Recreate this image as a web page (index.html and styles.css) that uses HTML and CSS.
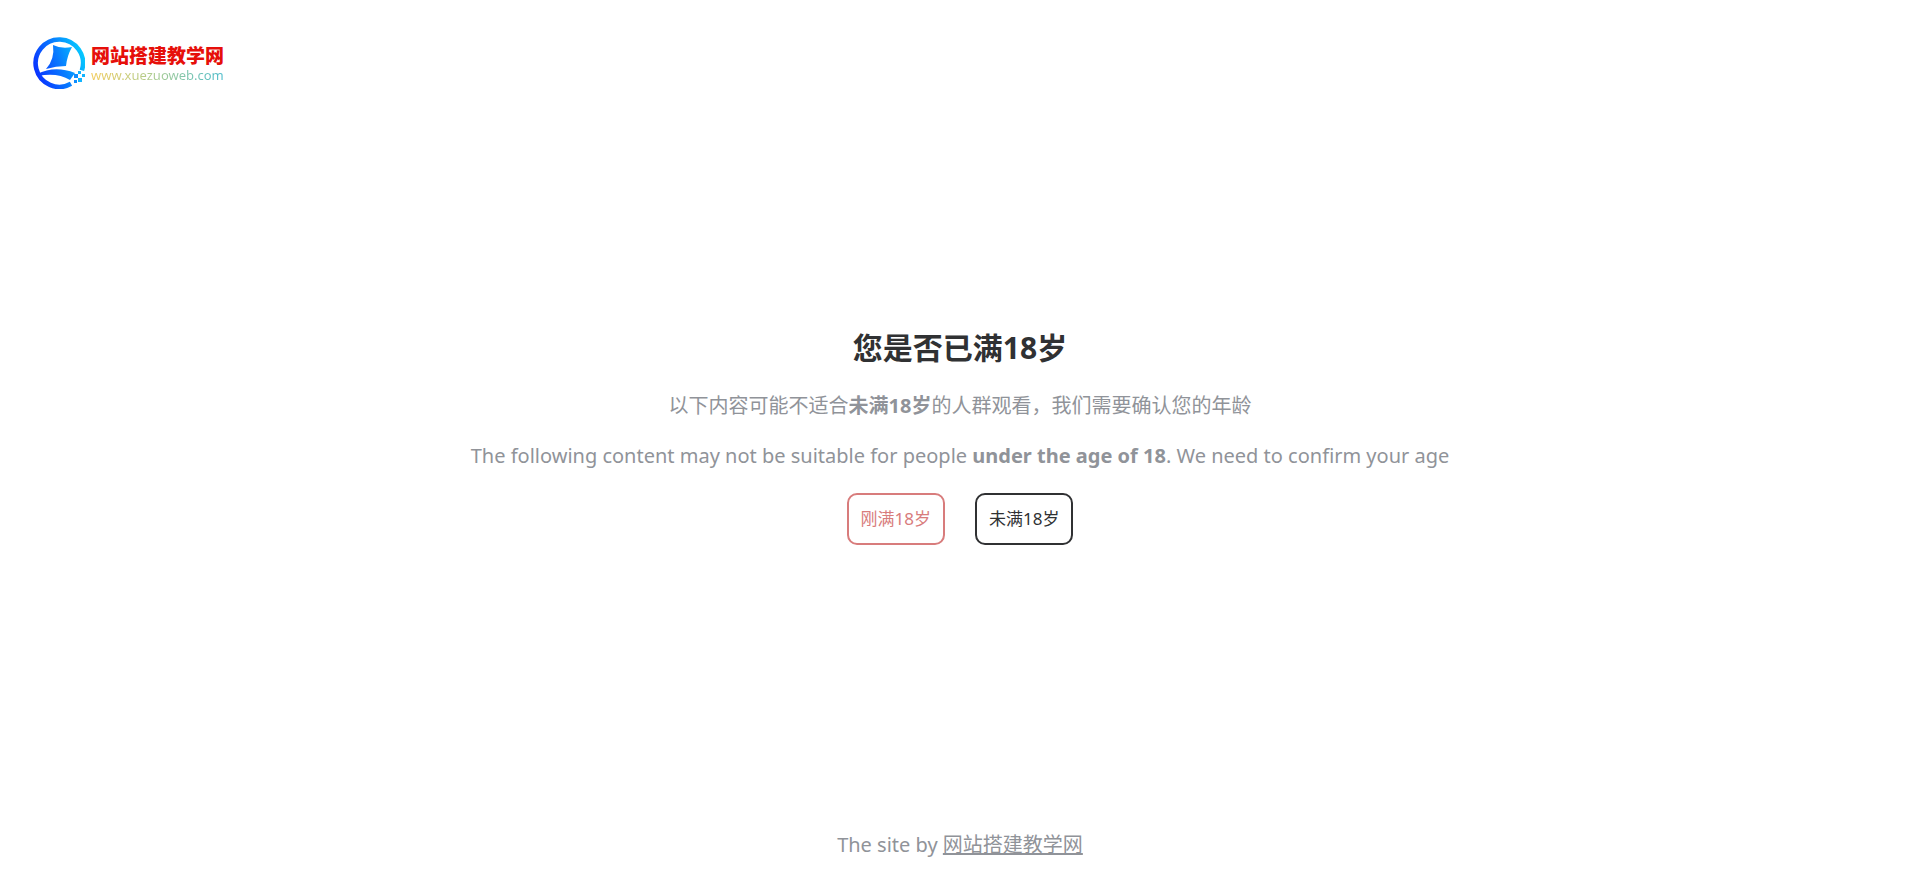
FILE: index.html
```
<!DOCTYPE html>
<html lang="zh-CN">
<head>
  <meta charset="UTF-8">
  <meta name="viewport" content="width=device-width, initial-scale=1.0">
  <title>您是否已满18岁</title>
  <link rel="stylesheet" href="styles.css">
</head>
<body>
  <header class="header">
    <a href="#" class="logo">
      <svg class="logo-icon" viewBox="0 0 52 52" aria-hidden="true">
        <defs>
          <linearGradient id="blue" gradientUnits="userSpaceOnUse" x1="0" y1="36" x2="52" y2="16">
            <stop offset="0" stop-color="#0a2cff"/>
            <stop offset="0.5" stop-color="#0878ff"/>
            <stop offset="1" stop-color="#05ceff"/>
          </linearGradient>
        </defs>
        <path fill="none" stroke="url(#blue)" stroke-width="4.6" d="M48.9 33.4A23.7 23.7 0 1 0 38 46.8"/>
        <path fill="url(#blue)" d="M20 8Q28 12 39 10Q34 19 33 29Q23 29 13 32Q22 22 20 8Z"/>
        <path fill="url(#blue)" d="M4 37Q22 28 42 36L37 43Q24 35 5 39Z"/>
        <path fill="#0d8dff" d="M41 37h4v4h-4z M41 43h3v3h-3z"/>
        <path fill="#12b4ff" d="M45 34h3v3h-3z M45 41h4v4h-4z M49 37h3v3h-3z"/>
      </svg>
      <span class="logo-text">
        <span class="logo-name">网站搭建教学网</span>
        <span class="logo-url">www.xuezuoweb.com</span>
      </span>
    </a>
  </header>

  <main class="main">
    <h1>您是否已满18岁</h1>
    <p>以下内容可能不适合<strong>未满18岁</strong>的人群观看，我们需要确认您的年龄</p>
    <p>The following content may not be suitable for people <strong>under the age of 18</strong>. We need to confirm your age</p>
    <div class="buttons">
      <button type="button" class="btn btn-yes">刚满18岁</button>
      <button type="button" class="btn btn-no">未满18岁</button>
    </div>
  </main>

  <footer class="footer">
    The site by <a href="#">网站搭建教学网</a>
  </footer>
</body>
</html>
```
FILE: styles.css
```
* {
  box-sizing: border-box;
}

body {
  margin: 0;
  min-height: 100vh;
  display: flex;
  flex-direction: column;
  font-family: "Noto Sans", "Noto Sans CJK SC", sans-serif;
  font-size: 20px;
  line-height: 30px;
  color: #909399;
  background-color: #fff;
}

.header {
  display: flex;
  padding: 37px 33px 0;
}

.logo {
  display: inline-flex;
  align-items: center;
  gap: 6px;
  text-decoration: none;
}

.logo-icon {
  width: 52px;
  height: 52px;
}

.logo-text {
  display: flex;
  flex-direction: column;
  padding-top: 2px;
}

.logo-name {
  font-family: "Noto Sans CJK SC", sans-serif;
  font-size: 19px;
  font-weight: 900;
  line-height: 22px;
  color: #e60f0a;
}

.logo-url {
  font-size: 13px;
  line-height: 18px;
  color: transparent;
  background: linear-gradient(90deg, #f2cc5c, #a8cc94 50%, #4cbccc);
  background-clip: text;
  -webkit-background-clip: text;
}

.main {
  flex: 1;
  display: flex;
  flex-direction: column;
  align-items: center;
  justify-content: center;
  gap: 20px;
  padding: 0 20px 50px;
  text-align: center;
}

h1 {
  margin: 0;
  font-size: 30px;
  line-height: 46px;
  color: #303133;
}

p {
  margin: 0;
}

.buttons {
  display: flex;
  gap: 30px;
  padding-top: 2px;
}

.btn {
  padding: 12px;
  border: 2px solid;
  border-radius: 10px;
  background-color: #fff;
  font-family: inherit;
  font-size: 17px;
  line-height: 24px;
  cursor: pointer;
}

.btn-yes {
  color: #d87c7c;
}

.btn-no {
  color: #303133;
}

.footer {
  padding: 0 20px 31px;
  text-align: center;
}

.footer a {
  color: inherit;
}
```
